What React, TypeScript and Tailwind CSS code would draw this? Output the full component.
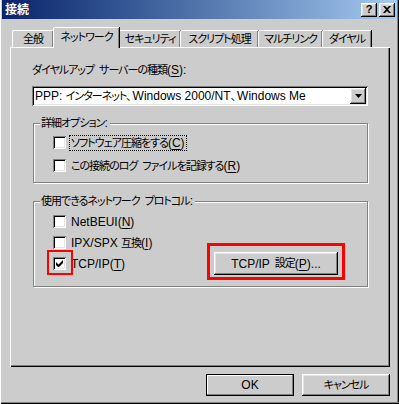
import { type FC, type ReactNode } from 'react'

// 3D borders in the classic Windows style
const raised =
  'shadow-[inset_-1px_-1px_0_#000,inset_1px_1px_0_#fff,inset_-2px_-2px_0_#808080,inset_2px_2px_0_#e4e4e4]'
const sunken =
  'shadow-[inset_1px_1px_0_#808080,inset_-1px_-1px_0_#fff,inset_2px_2px_0_#000,inset_-2px_-2px_0_#e4e4e4]'

const tabs = [
  { t: '全般', w: 'w-[41px]' },
  { t: 'ネットワーク', w: 'w-[66px]' },
  { t: 'セキュリティ', w: 'w-[61px]' },
  { t: 'スクリプト処理', w: 'w-[78px]' },
  { t: 'マルチリンク', w: 'w-[64px]' },
  { t: 'ダイヤル', w: 'w-[49px]' },
]

// 日本語の文字は少し詰める
const J: FC<{ children: ReactNode }> = ({ children }) => (
  <span className="text-[11px] tracking-[-1px]">{children}</span>
)

// 半角スペース
const Sp: FC = () => <span className="inline-block w-[5px]" />

const Key: FC<{ k: string }> = ({ k }) => (
  <>
    (<span className="underline underline-offset-2">{k}</span>)
  </>
)

const Check: FC<{ checked?: boolean }> = ({ checked }) => (
  <span className={`flex h-[13px] w-[13px] shrink-0 items-center justify-center bg-white ${sunken}`}>
    {checked && (
      <svg width="7" height="7" viewBox="0 0 7 7">
        <path d="M0 2v3l2 2h1l4-4V0L2.5 4.5z" fill="#000" />
      </svg>
    )}
  </span>
)

const Group: FC<{ title: ReactNode; className?: string; children: ReactNode }> = ({
  title,
  className,
  children,
}) => (
  <fieldset
    className={`w-[335px] border border-[#808080] shadow-[1px_1px_0_#fff,inset_1px_1px_0_#fff] ${className ?? ''}`}
  >
    <legend className="ml-[6px] bg-[#cccccc] pr-[2px] pl-[1px] leading-[15px]">
      {title}:
    </legend>
    {children}
  </fieldset>
)

export default function App() {
  return (
    <div className="flex h-[404px] w-[399px] flex-col bg-[#cccccc] text-[12px] text-black shadow-[inset_1px_0_0_#fff,inset_0_-1px_0_#000,inset_0_-2px_0_#808080,inset_-1px_0_0_#000,inset_-2px_0_0_#808080] font-['Liberation_Sans','Noto_Sans_CJK_JP',sans-serif] [font-feature-settings:'palt'] whitespace-nowrap">
      {/* タイトルバー */}
      <div className="mx-[2px] flex h-[19px] items-center justify-between bg-linear-to-r from-[#0a246a] to-[#a6caf0] pr-[2px] pl-[3px]">
        <span className="text-[12px] leading-none font-bold text-white">接続</span>
        <div className="flex gap-[2px]">
          <span className={`flex h-[14px] w-[16px] items-center justify-center bg-[#cccccc] text-[11px] leading-none font-bold ${raised}`}>
            ?
          </span>
          <span className={`flex h-[14px] w-[16px] items-center justify-center bg-[#cccccc] ${raised}`}>
            <svg width="8" height="7" viewBox="0 0 8 7">
              <path d="M0 0h2l2 2 2-2h2L5 3.5 8 7H6L4 5 2 7H0l3-3.5z" fill="#000" />
            </svg>
          </span>
        </div>
      </div>

      {/* タブ */}
      <div className="mt-[9px] flex h-[19px] items-end pl-[12px]">
        {tabs.map(({ t, w }, i) =>
          i === 1 ? (
            <div
              key={t}
              className={`relative z-10 -mb-[1px] flex h-[21px] ${w} items-center justify-center rounded-tl-[2px] border-t border-l border-white bg-[#cccccc] pb-[1px] shadow-[inset_-1px_0_0_#808080,1px_0_0_#000]`}
            >
              <J>{t}</J>
            </div>
          ) : (
            <div
              key={t}
              className={`flex h-[17px] ${w} items-center justify-center rounded-tl-[2px] border-t border-l border-white pt-[1px] shadow-[inset_-1px_0_0_#808080,1px_0_0_#000]`}
            >
              <J>{t}</J>
            </div>
          ),
        )}
      </div>

      {/* タブページ */}
      <div className="ml-[10px] flex h-[320px] w-[380px] flex-col border-t border-l border-white pl-[21px] shadow-[inset_-1px_-1px_0_#000,inset_-2px_-2px_0_#808080]">
        <div className="mt-[15px] leading-[15px]">
          <J>ダイヤルアップ</J>
          <Sp />
          <J>サーバーの種類</J>
          <Key k="S" />:
        </div>
        <div className={`mt-[8px] flex h-[20px] w-[336px] items-center bg-white pr-[2px] pl-[3px] ${sunken}`}>
          <span className="flex-1">
            PPP: <J>インターネット、</J>
            <span className="ml-[2px]">Windows 2000/NT</span>
            <J>、</J>
            <span className="ml-[2px]">Windows Me</span>
          </span>
          <span className={`flex h-[16px] w-[16px] items-center justify-center bg-[#cccccc] ${raised}`}>
            <svg width="7" height="4" viewBox="0 0 7 4">
              <path d="M0 0h7L3.5 4z" fill="#000" />
            </svg>
          </span>
        </div>

        <Group title={<J>詳細オプション</J>} className="mt-[10px] ml-[1px] pb-[5px]">
          <div className="flex h-[23px] items-center pl-[19px]">
            <Check />
            <span className="ml-[3px] border border-dotted border-black px-[1px] leading-[14px]">
              <J>ソフトウェア圧縮をする</J>
              <Key k="C" />
            </span>
          </div>
          <div className="flex h-[23px] items-center pl-[19px]">
            <Check />
            <span className="ml-[5px]">
              <J>この接続のログ</J>
              <Sp />
              <J>ファイルを記録する</J>
              <Key k="R" />
            </span>
          </div>
        </Group>

        <Group
          title={
            <>
              <J>使用できるネットワーク</J>
              <Sp />
              <J>プロトコル</J>
            </>
          }
          className="mt-[11px] ml-[1px] pt-[2px] pb-[12px]"
        >
          <div className="flex h-[21px] items-center pl-[19px]">
            <Check />
            <span className="ml-[5px]">
              NetBEUI<Key k="N" />
            </span>
          </div>
          <div className="flex h-[21px] items-center pl-[19px]">
            <Check />
            <span className="ml-[5px]">
              IPX/SPX <J>互換</J>
              <Key k="I" />
            </span>
          </div>
          <div className="flex h-[21px] items-center pl-[19px]">
            <span className="relative">
              <Check checked />
              <span className="absolute -top-[7px] -right-[7px] -bottom-[5px] -left-[6px] border-2 border-[#ff0000]" />
            </span>
            <span className="ml-[5px]">
              TCP/IP<Key k="T" />
            </span>
            <span className="relative mr-[29px] ml-auto">
              <span className={`flex h-[23px] w-[124px] items-center justify-center bg-[#cccccc] ${raised}`}>
                TCP/IP<Sp />
                <J>設定</J>
                <Key k="P" />...
              </span>
              <span className="absolute -top-[9px] -right-[7px] -bottom-[5px] -left-[7px] border-[3px] border-[#ff0000]" />
            </span>
          </div>
        </Group>
      </div>

      {/* ボタン */}
      <div className="mt-[7px] flex justify-end gap-[8px] pr-[9px]">
        <span className="flex h-[22px] w-[88px] items-center justify-center border border-black bg-[#cccccc] shadow-[inset_-1px_-1px_0_#808080,inset_1px_1px_0_#fff]">
          OK
        </span>
        <span className={`flex h-[22px] w-[88px] items-center justify-center bg-[#cccccc] ${raised}`}>
          <J>キャンセル</J>
        </span>
      </div>
    </div>
  )
}
